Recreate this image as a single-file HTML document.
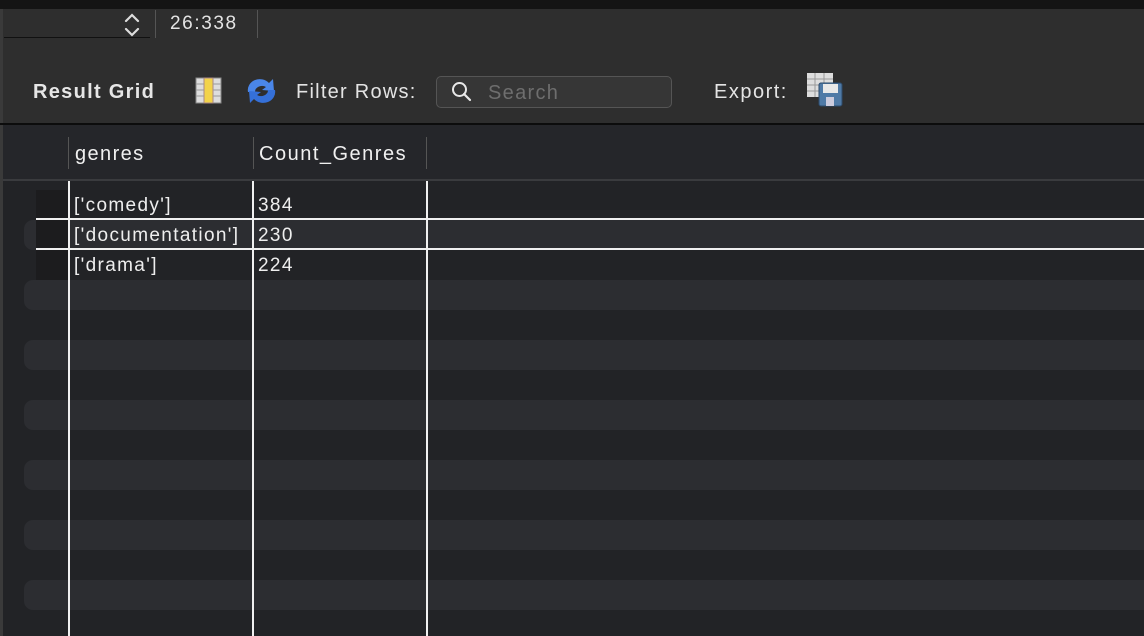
<!DOCTYPE html>
<html><head><style>
*{margin:0;padding:0;box-sizing:border-box}
body{width:1144px;height:636px;overflow:hidden;background:#222326;font-family:"Liberation Sans",sans-serif;position:relative;color:#e8e8e8}
.a{position:absolute}
.stripe{position:absolute;left:24px;right:0;height:30px;background:#2c2d31;border-radius:9px 0 0 9px}
.vl{position:absolute;top:181px;bottom:0;width:2px;background:#f0f0f0}
.hl{position:absolute;left:36px;right:0;height:2px;background:#f0f0f0}
.t{position:absolute;font-size:19px;color:#eee;letter-spacing:1.35px}
</style></head><body>
<div class="a" style="left:0;top:0;width:1144px;height:9px;background:#141414"></div>
<div class="a" style="left:0;top:9px;width:1144px;height:114px;background:#2e2e2e"></div>
<div class="a" style="left:0;top:9px;width:3px;height:627px;background:#3a3a3a"></div>
<div class="a" style="left:4px;top:37px;width:146px;height:1px;background:#111"></div>
<svg class="a" style="left:123px;top:12px" width="18" height="26" viewBox="0 0 18 26"><path d="M3 9 L9 3 L15 9 M3 17 L9 23 L15 17" stroke="#ddd" stroke-width="2.2" fill="none" stroke-linecap="round"/></svg>
<div class="a" style="left:155px;top:10px;width:1px;height:28px;background:#555"></div>
<div class="a" style="left:257px;top:10px;width:1px;height:28px;background:#555"></div>
<div class="a" style="left:170px;top:13px;font-size:19px;color:#e4e4e4;letter-spacing:1.6px">26:338</div>
<div class="a" style="left:33px;top:81px;font-size:20px;font-weight:bold;color:#e6e6e6;letter-spacing:1.3px">Result Grid</div>
<svg class="a" style="left:195px;top:77px" width="27" height="27" viewBox="0 0 27 27"><rect x="1" y="1" width="25" height="25" fill="#ddd" stroke="#888"/><rect x="9" y="1" width="9" height="25" fill="#f2d34a" stroke="#a88"/><g stroke="#999"><line x1="1" y1="7" x2="9" y2="7"/><line x1="1" y1="13" x2="9" y2="13"/><line x1="1" y1="19" x2="9" y2="19"/><line x1="18" y1="7" x2="26" y2="7"/><line x1="18" y1="13" x2="26" y2="13"/><line x1="18" y1="19" x2="26" y2="19"/></g></svg>
<svg class="a" style="left:245px;top:77px" width="33" height="28" viewBox="0 0 33 28"><path d="M3 15 A12 11 0 0 1 24 6 L28 2 L29 14 L17 13 L21 10 A7 6 0 0 0 10 15 Z" fill="#4a86e8"/><path d="M30 13 A12 11 0 0 1 9 22 L5 26 L4 14 L16 15 L12 18 A7 6 0 0 0 23 13 Z" fill="#3570d8"/></svg>
<div class="a" style="left:296px;top:81px;font-size:20px;color:#e4e4e4;letter-spacing:1.25px">Filter Rows:</div>
<div class="a" style="left:436px;top:76px;width:236px;height:32px;border:1px solid #555;border-radius:5px;background:#363636"></div>
<svg class="a" style="left:450px;top:80px" width="24" height="24" viewBox="0 0 24 24"><circle cx="9.5" cy="9.5" r="6.5" stroke="#e8e8e8" stroke-width="2" fill="none"/><line x1="14" y1="14" x2="20" y2="20" stroke="#e8e8e8" stroke-width="2.2" stroke-linecap="round"/></svg>
<div class="a" style="left:488px;top:82px;font-size:20px;color:#6e6e6e;letter-spacing:1.3px">Search</div>
<div class="a" style="left:714px;top:81px;font-size:20px;color:#e4e4e4;letter-spacing:1.5px">Export:</div>
<svg class="a" style="left:806px;top:72px" width="38" height="36" viewBox="0 0 38 36"><rect x="1" y="1" width="26" height="24" fill="#ddd"/><g stroke="#999"><line x1="1" y1="7" x2="27" y2="7"/><line x1="1" y1="13" x2="27" y2="13"/><line x1="1" y1="19" x2="27" y2="19"/><line x1="9" y1="1" x2="9" y2="25"/><line x1="18" y1="1" x2="18" y2="25"/></g><rect x="13" y="11" width="23" height="23" rx="2" fill="#4f7aa6" stroke="#2c4a6a"/><rect x="17" y="12" width="15" height="9" fill="#e8e8e8"/><rect x="20" y="25" width="8" height="9" fill="#ccd"/></svg>
<div class="a" style="left:0;top:123px;width:1144px;height:2px;background:#0c0c0c"></div>
<div class="a" style="left:3px;top:125px;width:1141px;height:54px;background:#25262a"></div>
<div class="a" style="left:3px;top:179px;width:1141px;height:2px;background:#3a3b3e"></div>
<div class="a" style="left:68px;top:137px;width:1px;height:32px;background:#555"></div>
<div class="a" style="left:253px;top:137px;width:1px;height:32px;background:#555"></div>
<div class="a" style="left:426px;top:137px;width:1px;height:32px;background:#555"></div>
<div class="a" style="left:75px;top:143px;font-size:20px;color:#f0f0f0;letter-spacing:1.4px">genres</div>
<div class="a" style="left:259px;top:143px;font-size:20px;color:#f0f0f0;letter-spacing:1.5px">Count_Genres</div>
<div class="stripe" style="top:220px"></div>
<div class="stripe" style="top:280px"></div>
<div class="stripe" style="top:340px"></div>
<div class="stripe" style="top:400px"></div>
<div class="stripe" style="top:460px"></div>
<div class="stripe" style="top:520px"></div>
<div class="stripe" style="top:580px"></div>
<div class="a" style="left:36px;top:190px;width:33px;height:90px;background:#1c1c1e"></div>
<div class="a" style="left:69px;top:190px;width:1075px;height:30px;background:#222326"></div>
<div class="a" style="left:69px;top:250px;width:1075px;height:30px;background:#222326"></div>
<div class="hl" style="top:218px"></div>
<div class="hl" style="top:248px"></div>
<div class="vl" style="left:68px"></div>
<div class="vl" style="left:252px"></div>
<div class="vl" style="left:426px"></div>
<div class="t" style="left:74px;top:195px">['comedy']</div>
<div class="t" style="left:258px;top:195px">384</div>
<div class="t" style="left:74px;top:225px">['documentation']</div>
<div class="t" style="left:258px;top:225px">230</div>
<div class="t" style="left:74px;top:255px">['drama']</div>
<div class="t" style="left:258px;top:255px">224</div>
</body></html>
